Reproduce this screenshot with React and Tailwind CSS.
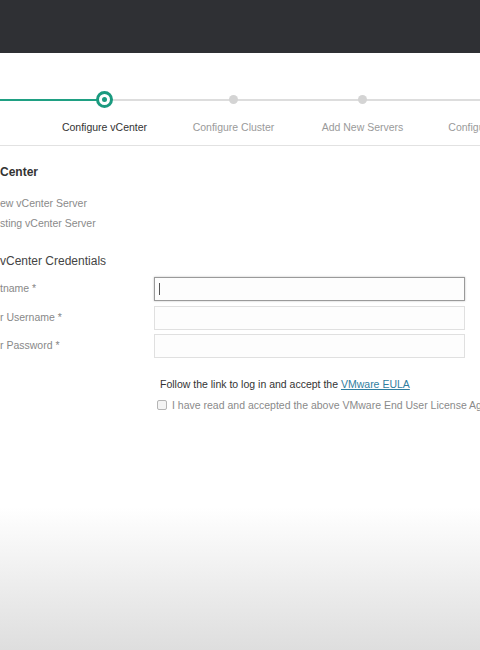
import React from "react";

const steps = [
  { label: "", state: "done" },
  { label: "Configure vCenter", state: "active" },
  { label: "Configure Cluster", state: "todo" },
  { label: "Add New Servers", state: "todo" },
  { label: "Configure Settings", state: "todo" },
];

function Step({ step }) {
  const leftTeal = step.state === "done" || step.state === "active";
  const rightTeal = step.state === "done";
  return (
    <div className="flex flex-col items-center w-[129px] shrink-0">
      <div className="relative w-full h-[17px] flex items-center">
        <div className={`h-[2px] flex-1 ${leftTeal ? "bg-[#1fa083]" : "bg-[#dddddd]"}`} />
        <div className={`h-[2px] flex-1 ${rightTeal ? "bg-[#1fa083]" : "bg-[#dddddd]"}`} />
        <div className="absolute inset-0 flex items-center justify-center">
          {step.state === "active" ? (
            <div className="w-[17px] h-[17px] rounded-full border-[3px] border-[#1a9a7f] bg-white flex items-center justify-center">
              <div className="w-[5px] h-[5px] rounded-full bg-[#1a9a7f]" />
            </div>
          ) : step.state === "todo" ? (
            <div className="w-[9px] h-[9px] rounded-full bg-[#d4d4d4]" />
          ) : (
            <div className="w-[9px] h-[9px] rounded-full bg-[#1fa083]" />
          )}
        </div>
      </div>
      <div
        className={`mt-[13px] text-[10.5px] leading-[13px] whitespace-nowrap ${
          step.state === "active" ? "text-[#333333]" : "text-[#9a9a9a]"
        }`}
      >
        {step.label}
      </div>
    </div>
  );
}

function Row({ label, focused }) {
  return (
    <div className="flex items-center h-[24px]">
      <div className="w-[154px] shrink-0 text-[10.5px] text-[#888888]">{label}</div>
      <div
        className={`w-[311px] h-[24px] shrink-0 flex items-center px-[4px] bg-[#fdfdfd] border ${
          focused ? "border-[#9a9a9a] shadow-[0_0_2px_rgba(0,0,0,0.25)]" : "border-[#e0e0e0]"
        }`}
      >
        {focused && <div className="w-[1px] h-[12px] bg-[#555555]" />}
      </div>
    </div>
  );
}

export default function App() {
  return (
    <div
      className="w-[480px] h-[650px] overflow-hidden flex flex-col bg-white"
      style={{ fontFamily: '"Liberation Sans", Arial, sans-serif' }}
    >
      <div className="h-[53px] shrink-0 bg-[#2f3034]" />
      <div className="shrink-0 pt-[38px] pb-[11px] border-b border-[#e2e2e2] overflow-hidden">
        <div className="flex ml-[-89px]">
          {steps.map((s, i) => (
            <Step key={i} step={s} />
          ))}
        </div>
      </div>
      <div className="shrink-0 pt-[19px]">
        <div className="text-[12px] leading-[14px] font-bold text-[#333333]">Center</div>
        <div className="mt-[17px] text-[10.5px] leading-[14px] text-[#8a8a8a]">ew vCenter Server</div>
        <div className="mt-[6px] text-[10.5px] leading-[14px] text-[#8a8a8a]">sting vCenter Server</div>
        <div className="mt-[24px] text-[12px] leading-[15px] text-[#444444]">vCenter Credentials</div>
        <div className="mt-[8px] flex flex-col gap-[4.5px]">
          <Row label="tname *" focused />
          <Row label="r Username *" />
          <Row label="r Password *" />
        </div>
        <div className="mt-[19px] pl-[160px] text-[10.5px] leading-[14px] text-[#333333] whitespace-nowrap">
          Follow the link to log in and accept the{" "}
          <span className="text-[#2f7ea0] underline">VMware EULA</span>
        </div>
        <div className="mt-[7px] pl-[157px] flex items-center gap-[5px] whitespace-nowrap">
          <div className="w-[10px] h-[10px] border border-[#b5b5b5] rounded-[2px] bg-[#f4f4f4] shrink-0" />
          <span className="text-[10.5px] leading-[14px] text-[#8a8a8a]">
            I have read and accepted the above VMware End User License Agreement
          </span>
        </div>
      </div>
      <div className="flex-1 mt-[95px] bg-gradient-to-b from-white to-[#dedede]" />
    </div>
  );
}
